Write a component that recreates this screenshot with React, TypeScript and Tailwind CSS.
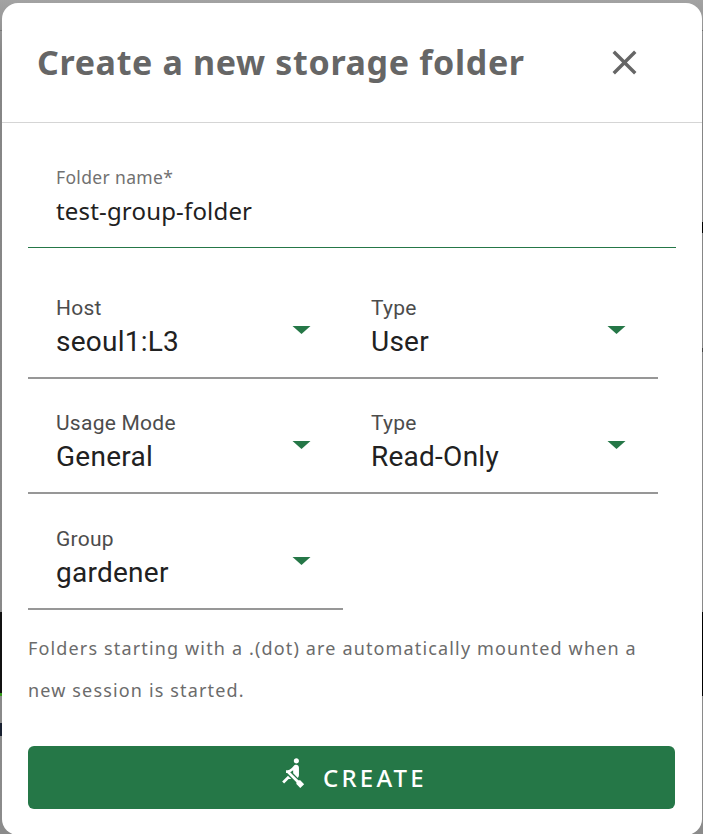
import { MdClose, MdRowing } from 'react-icons/md';

function Select({ label, value }: { label: string; value: string }) {
  return (
    <div className="flex h-[99px] w-[315px] items-start justify-between border-b-2 border-[#979797] pl-7 pr-[32.5px] font-[Roboto,sans-serif]">
      <div className="flex flex-col pt-[13px]">
        <span className="h-[31px] text-[21px] leading-[30px] tracking-[0.25px] text-[#4c4c4c]">{label}</span>
        <span className="h-[36px] whitespace-nowrap text-[28px] leading-[36px] tracking-[0.25px] text-[#212121]">{value}</span>
      </div>
      <svg className="mt-[46px] h-2 w-[19px]" viewBox="0 0 19 8" fill="#257747"><path d="M.5 0h18l-9 8z" /></svg>
    </div>
  );
}

export default function App() {
  return (
    <div className="flex h-[834px] w-[703px] flex-col overflow-hidden bg-[linear-gradient(#a3a3a3,#858585_60px,#8b8b8b)]">
      <div className="h-[3px] shrink-0" />
      <div className="flex h-[832px] shrink-0">
        <div className="flex w-[2px] flex-col">
          <div className="mt-[27px] h-px bg-[#777]" />
          <div className="mt-[581px] h-[81px] bg-[#111]" />
          <div className="h-[3px] bg-[#33991a]" />
          <div className="mt-[27px] h-[13px] bg-[#182030]" />
        </div>
        <main className="flex w-[700px] flex-col rounded-[16px] bg-white font-['Noto_Sans',sans-serif]">
          <header className="flex h-[120px] items-center justify-between border-b border-[#d5d5d5] pl-[35px] pr-[57px]">
            <h1 className="pb-[2px] text-[34px] font-bold leading-[44px] tracking-[0.66px] text-[#666]">
              Create a new storage folder
            </h1>
            <button aria-label="Close" className="pb-px"><MdClose className="size-[41px] text-[#666]" /></button>
          </header>
          <section className="flex flex-col px-[26px]">
            <div className="mt-[32px] flex h-[93px] w-[648px] flex-col border-b border-[#257747] pl-7 pt-[7px]">
              <span className="h-[30px] text-[17.5px] leading-[30px] tracking-[0.34px] text-[#717171]">Folder name*</span>
              <span className="h-[38px] text-[24px] leading-[38px] tracking-[0.17px] text-[#212121]">test-group-folder</span>
            </div>
            <div className="mt-[32px] flex">
              <Select label="Host" value="seoul1:L3" />
              <Select label="Type" value="User" />
            </div>
            <div className="mt-[16px] flex">
              <Select label="Usage Mode" value="General" />
              <Select label="Type" value="Read-Only" />
            </div>
            <div className="mt-[17px] flex">
              <Select label="Group" value="gardener" />
            </div>
            <p className="mt-[17px] h-[84px] whitespace-nowrap text-[18px] leading-[42px] tracking-[1.15px] text-[#6b6b6b]">
              Folders starting with a .(dot) are automatically mounted when a<br />new session is started.
            </p>
            <button className="mt-[35px] flex h-[63px] w-[647px] items-center rounded-[6px] bg-[#257747] pl-[249px] text-white">
              <MdRowing className="mb-[10px] size-[31px]" />
              <span className="ml-[15px] text-[24px] font-medium leading-[34px] tracking-[3.2px]">CREATE</span>
            </button>
          </section>
        </main>
        <div className="flex w-px flex-col">
          <div className="mt-[27px] h-px bg-[#666]" />
          <div className="mt-[191px] h-[11px] bg-black" />
          <div className="mt-[115px] h-[4px] bg-[#444]" />
          <div className="mt-[260px] h-[84px] bg-black" />
        </div>
      </div>
    </div>
  );
}
